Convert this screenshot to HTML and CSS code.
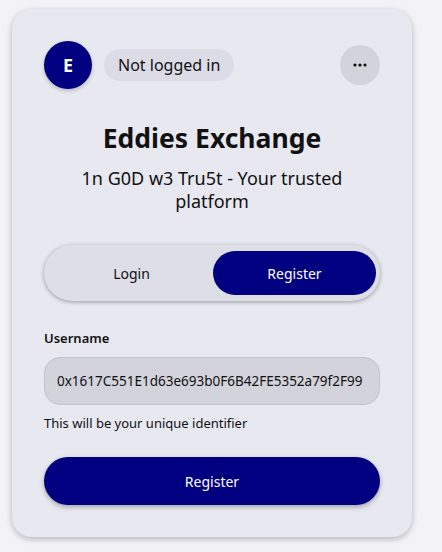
FILE: index.html
```html
<!DOCTYPE html>
<html lang="en">
<head>
    <meta charset="UTF-8">
    <meta name="viewport" content="width=device-width, initial-scale=1.0">
    <title>Eddies Exchange</title>
    <link rel="stylesheet" href="styles.css">
</head>
<body>
    <div class="card">
        <div class="top-bar">
            <div class="avatar">E</div>
            <div class="status">Not logged in</div>
            <button class="more-btn" aria-label="More">
                <svg width="14" height="4" viewBox="0 0 14 4">
                    <circle cx="2" cy="2" r="1.6" fill="#111"/>
                    <circle cx="7" cy="2" r="1.6" fill="#111"/>
                    <circle cx="12" cy="2" r="1.6" fill="#111"/>
                </svg>
            </button>
        </div>

        <h1 class="title">Eddies Exchange</h1>
        <p class="subtitle">1n G0D w3 Tru5t - Your trusted platform</p>

        <div class="tabs">
            <div class="tab">Login</div>
            <div class="tab active">Register</div>
        </div>

        <form class="form" onsubmit="return false;">
            <label class="label" for="username">Username</label>
            <input class="input" id="username" type="text" value="0x1617C551E1d63e693b0F6B42FE5352a79f2F99" readonly>
            <div class="hint">This will be your unique identifier</div>
            <button type="submit" class="submit">Register</button>
        </form>
    </div>
</body>
</html>
```

FILE: styles.css
```css
body {
    font-family: "Noto Sans", "Open Sans", sans-serif;
    background-color: #f2f2f7;
    margin: 0;
    padding: 9px 12px;
    color: #111;
}
.card {
    width: 400px;
    box-sizing: border-box;
    background: #e8e8f1;
    border-radius: 20px;
    padding: 32px 32px 32px;
    box-shadow: 0 2px 6px rgba(0, 0, 0, 0.25);
}
.top-bar {
    display: flex;
    align-items: center;
    gap: 12px;
}
.avatar {
    width: 48px;
    height: 48px;
    border-radius: 50%;
    background-color: #000080;
    color: white;
    font-weight: bold;
    font-size: 18px;
    display: flex;
    justify-content: center;
    align-items: center;
    box-shadow: 0 2px 4px rgba(0, 0, 0, 0.2);
}
.status {
    background: #dcdce6;
    border-radius: 16px;
    padding: 0 14px;
    height: 32px;
    line-height: 32px;
    font-size: 16px;
}
.more-btn {
    margin-left: auto;
    width: 40px;
    height: 40px;
    border-radius: 50%;
    border: none;
    background: #d3d3dc;
    display: flex;
    justify-content: center;
    align-items: center;
    padding: 0;
    cursor: pointer;
}
.title {
    text-align: center;
    font-size: 26.5px;
    font-weight: bold;
    margin: 33px 0 0;
    line-height: 32px;
}
.subtitle {
    text-align: center;
    font-size: 18px;
    line-height: 23px;
    margin: 13px 30px 0;
}
.tabs {
    margin-top: 32px;
    display: flex;
    background: #dedee7;
    border-radius: 28px;
    padding: 6px 4px 6px 6px;
    box-shadow: 0 1px 4px rgba(0, 0, 0, 0.35);
}
.tab {
    flex: 1;
    height: 44px;
    border-radius: 22px;
    display: flex;
    justify-content: center;
    align-items: center;
    font-size: 14px;
}
.tab.active {
    background-color: #000080;
    color: white;
}
.form {
    margin-top: 28px;
    display: flex;
    flex-direction: column;
}
.label {
    font-size: 13px;
    font-weight: 600;
    margin-bottom: 10px;
}
.input {
    font-family: inherit;
    height: 48px;
    box-sizing: border-box;
    background: #d3d3dc;
    border: 1px solid #c3c3ce;
    border-radius: 16px;
    padding: 0 12px;
    font-size: 13.5px;
    color: #111;
    outline: none;
}
.hint {
    font-size: 13px;
    margin-top: 9px;
}
.submit {
    margin-top: 25px;
    height: 48px;
    border: none;
    border-radius: 24px;
    background-color: #000080;
    color: white;
    font-family: inherit;
    font-size: 14px;
    cursor: pointer;
    box-shadow: 0 2px 5px rgba(0, 0, 0, 0.3);
}
```
